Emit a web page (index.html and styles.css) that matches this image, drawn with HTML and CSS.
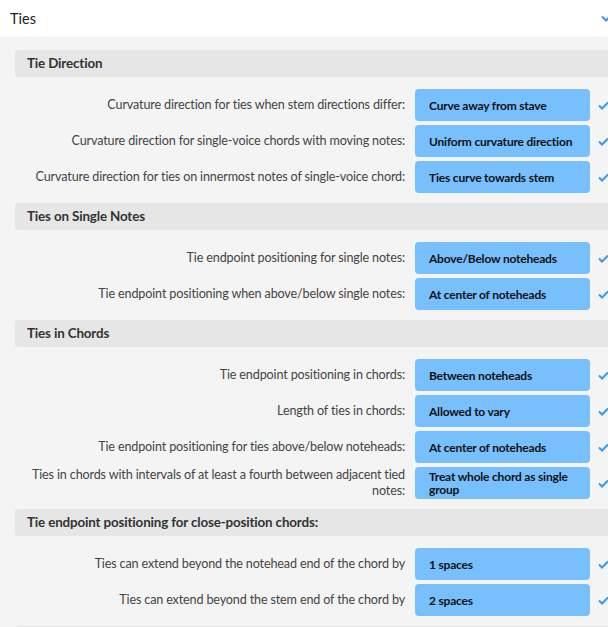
FILE: index.html
```html
<!DOCTYPE html>
<html lang="en">
<head>
    <meta charset="UTF-8">
    <meta name="viewport" content="width=device-width, initial-scale=1.0">
    <title>Engraving Options - Ties</title>
    <link rel="stylesheet" href="styles.css">
</head>
<body>
    <div class="page">
        <div class="panel-header">
            <span class="panel-title">Ties</span>
            <svg class="chevron" width="10" height="7" viewBox="0 0 10 7"><polyline points="1,1.5 5,5.5 9,1.5" fill="none" stroke="#3d98ea" stroke-width="2"/></svg>
        </div>

        <div class="panel-body">
            <div class="group-title">Tie Direction</div>
            <div class="rows">
                <div class="row">
                    <div class="label">Curvature direction for ties when stem directions differ:</div>
                    <div class="select">Curve away from stave</div>
                    <svg class="check" width="11" height="9" viewBox="0 0 11 9"><polyline points="1,4.5 4,7.5 10,1.5" fill="none" stroke="#3d98ea" stroke-width="2"/></svg>
                </div>
                <div class="row">
                    <div class="label">Curvature direction for single-voice chords with moving notes:</div>
                    <div class="select">Uniform curvature direction</div>
                    <svg class="check" width="11" height="9" viewBox="0 0 11 9"><polyline points="1,4.5 4,7.5 10,1.5" fill="none" stroke="#3d98ea" stroke-width="2"/></svg>
                </div>
                <div class="row">
                    <div class="label">Curvature direction for ties on innermost notes of single-voice chord:</div>
                    <div class="select">Ties curve towards stem</div>
                    <svg class="check" width="11" height="9" viewBox="0 0 11 9"><polyline points="1,4.5 4,7.5 10,1.5" fill="none" stroke="#3d98ea" stroke-width="2"/></svg>
                </div>
            </div>

            <div class="group-title">Ties on Single Notes</div>
            <div class="rows">
                <div class="row">
                    <div class="label">Tie endpoint positioning for single notes:</div>
                    <div class="select">Above/Below noteheads</div>
                    <svg class="check" width="11" height="9" viewBox="0 0 11 9"><polyline points="1,4.5 4,7.5 10,1.5" fill="none" stroke="#3d98ea" stroke-width="2"/></svg>
                </div>
                <div class="row">
                    <div class="label">Tie endpoint positioning when above/below single notes:</div>
                    <div class="select">At center of noteheads</div>
                    <svg class="check" width="11" height="9" viewBox="0 0 11 9"><polyline points="1,4.5 4,7.5 10,1.5" fill="none" stroke="#3d98ea" stroke-width="2"/></svg>
                </div>
            </div>

            <div class="group-title">Ties in Chords</div>
            <div class="rows">
                <div class="row">
                    <div class="label">Tie endpoint positioning in chords:</div>
                    <div class="select">Between noteheads</div>
                    <svg class="check" width="11" height="9" viewBox="0 0 11 9"><polyline points="1,4.5 4,7.5 10,1.5" fill="none" stroke="#3d98ea" stroke-width="2"/></svg>
                </div>
                <div class="row">
                    <div class="label">Length of ties in chords:</div>
                    <div class="select">Allowed to vary</div>
                    <svg class="check" width="11" height="9" viewBox="0 0 11 9"><polyline points="1,4.5 4,7.5 10,1.5" fill="none" stroke="#3d98ea" stroke-width="2"/></svg>
                </div>
                <div class="row">
                    <div class="label">Tie endpoint positioning for ties above/below noteheads:</div>
                    <div class="select">At center of noteheads</div>
                    <svg class="check" width="11" height="9" viewBox="0 0 11 9"><polyline points="1,4.5 4,7.5 10,1.5" fill="none" stroke="#3d98ea" stroke-width="2"/></svg>
                </div>
                <div class="row">
                    <div class="label">Ties in chords with intervals of at least a fourth between adjacent tied notes:</div>
                    <div class="select">Treat whole chord as single group</div>
                    <svg class="check" width="11" height="9" viewBox="0 0 11 9"><polyline points="1,4.5 4,7.5 10,1.5" fill="none" stroke="#3d98ea" stroke-width="2"/></svg>
                </div>
            </div>

            <div class="group-title">Tie endpoint positioning for close-position chords:</div>
            <div class="rows">
                <div class="row">
                    <div class="label">Ties can extend beyond the notehead end of the chord by</div>
                    <div class="select">1 spaces</div>
                    <svg class="check" width="11" height="9" viewBox="0 0 11 9"><polyline points="1,4.5 4,7.5 10,1.5" fill="none" stroke="#3d98ea" stroke-width="2"/></svg>
                </div>
                <div class="row">
                    <div class="label">Ties can extend beyond the stem end of the chord by</div>
                    <div class="select">2 spaces</div>
                    <svg class="check" width="11" height="9" viewBox="0 0 11 9"><polyline points="1,4.5 4,7.5 10,1.5" fill="none" stroke="#3d98ea" stroke-width="2"/></svg>
                </div>
            </div>

            <div class="group-title"></div>
        </div>
    </div>
</body>
</html>
```

FILE: styles.css
```css
body {
    margin: 0;
    background-color: #f4f4f4;
    color: #333;
    font-family: Lato, "Noto Sans", sans-serif;
    overflow: hidden;
}
.page {
    width: 625px;
}
.panel-header {
    display: flex;
    align-items: center;
    justify-content: space-between;
    height: 37px;
    padding: 0 14px 0 10px;
    background-color: #fff;
}
.panel-title {
    font-size: 14.5px;
    color: #222;
}
.panel-body {
    padding: 13px 0 0 15px;
}
.group-title {
    height: 27px;
    line-height: 27px;
    padding-left: 12px;
    background-color: #e6e6e6;
    border-radius: 3px;
    font-size: 13.4px;
    font-weight: bold;
    letter-spacing: -0.15px;
    color: #333;
}
.rows {
    display: flex;
    flex-direction: column;
    gap: 4px;
    padding: 12px 0 10px;
}
.row {
    display: grid;
    grid-template-columns: 390px 175px 11px;
    column-gap: 10px;
    align-items: center;
}
.label {
    text-align: right;
    font-size: 12.6px;
    letter-spacing: -0.15px;
    line-height: 16px;
    color: #444;
}
.select {
    display: flex;
    align-items: center;
    min-height: 32px;
    box-sizing: border-box;
    padding: 0 8px 0 14px;
    background-color: #77bffd;
    border-radius: 4px;
    font-size: 12px;
    font-weight: bold;
    letter-spacing: -0.2px;
    line-height: 13px;
    color: #111;
}
.check {
    margin-left: -2px;
}
```
